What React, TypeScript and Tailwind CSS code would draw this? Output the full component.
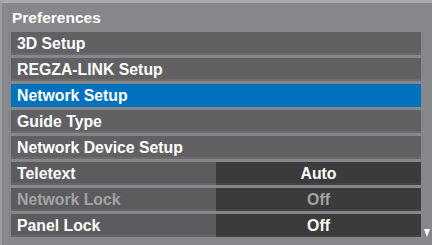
import React from 'react';

type Row = {
  label: string;
  value?: string;
  selected?: boolean;
  disabled?: boolean;
};

const rows: Row[] = [
  { label: '3D Setup' },
  { label: 'REGZA-LINK Setup' },
  { label: 'Network Setup', selected: true },
  { label: 'Guide Type' },
  { label: 'Network Device Setup' },
  { label: 'Teletext', value: 'Auto' },
  { label: 'Network Lock', value: 'Off', disabled: true },
  { label: 'Panel Lock', value: 'Off' },
];

export default function App() {
  return (
    <div
      className="w-[432px] h-[245px] bg-[#86878a] border-t-[3px] border-t-[#a9aaac] border-l-[2px] border-l-[#9a9b9d] flex flex-col overflow-hidden"
      style={{ fontFamily: '"Liberation Sans", Arial, sans-serif' }}
    >
      <div className="h-[29px] pl-[10px] flex items-center text-white font-bold text-[15.5px] leading-none">
        Preferences
      </div>
      <div className="flex flex-col gap-[3px] pl-[9px] pr-[11px]">
        {rows.map((row, i) => (
          <div
            key={row.label}
            className={
              'relative h-[23px] flex font-bold text-[15.8px] leading-none ' +
              (row.disabled ? 'text-[#a3a3a5]' : 'text-white')
            }
          >
            {row.value ? (
              <>
                <div className="w-[205px] flex items-center pl-[6px] bg-[#5c5c5e] shadow-[inset_0_-2px_0_#666668]">
                  {row.label}
                </div>
                <div className="flex-1 flex items-center justify-center bg-[#3b3b3c] shadow-[inset_0_-2px_0_#444445]">
                  {row.value}
                </div>
              </>
            ) : (
              <div
                className={
                  'flex-1 flex items-center pl-[6px] ' +
                  (row.selected
                    ? 'bg-[#0072bd]'
                    : 'bg-[#616163] shadow-[inset_0_-2px_0_#6b6b6d]')
                }
              >
                {row.label}
              </div>
            )}
            {i === rows.length - 1 && (
              <svg
                className="absolute right-[-9px] top-[15px]"
                width="6"
                height="8"
                viewBox="0 0 6 8"
              >
                <polygon points="0,0 6,0 3,8" fill="#ffffff" />
              </svg>
            )}
          </div>
        ))}
      </div>
    </div>
  );
}
